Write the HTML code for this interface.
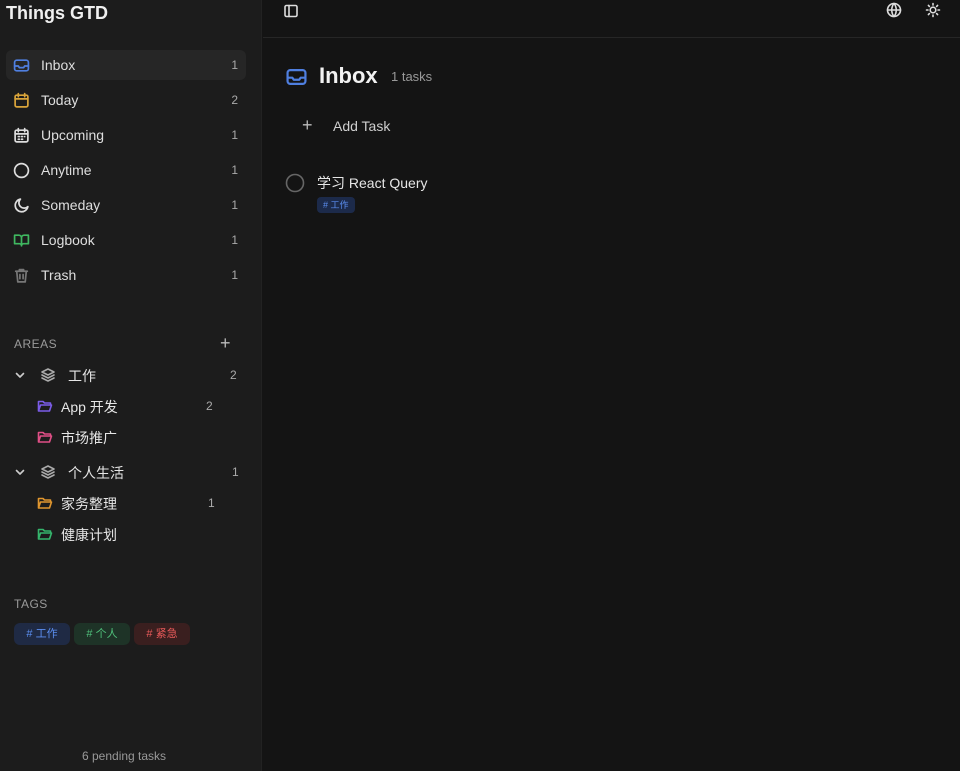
<!DOCTYPE html>
<html><head><meta charset="utf-8"><style>
*{box-sizing:border-box;margin:0;padding:0}
body{width:960px;height:771px;overflow:hidden;background:#141414;font-family:"Liberation Sans","Noto Sans CJK SC",sans-serif;color:#e6e6e6;position:relative}
.sb{position:absolute;left:0;top:0;width:262px;height:771px;background:#1c1c1c;border-right:1px solid #222}
.abs{position:absolute}
.title{left:6px;top:3px;font-size:18px;font-weight:bold;color:#f0f0f0}
.nav{position:absolute;left:6px;width:240px;height:30px;border-radius:6px;display:flex;align-items:center;font-size:14px;color:#dedede}
.nav svg{position:absolute;left:7px;top:7px}
.nav .l{position:absolute;left:35px}
.nav .c{position:absolute;right:8px;font-size:12px;color:#aaa}
.sec{font-size:12px;color:#9a9a9a;letter-spacing:.5px}
.tag{position:absolute;top:623px;height:22px;border-radius:6px;font-size:11px;line-height:22px;width:56px;text-align:center}
svg{fill:none;stroke-width:1.6;stroke-linecap:round;stroke-linejoin:round}
</style></head><body>
<div class="sb">
<div class="abs title">Things GTD</div>

<div class="nav" style="top:50px;background:#262626"><svg width="17" height="17" viewBox="0 0 16 16" stroke="#4f7fe0"><rect x="1.5" y="3" width="13" height="10" rx="2"/><path d="M1.5 8.5h3.5l1 1.5h4l1-1.5h3.5"/></svg><span class="l">Inbox</span><span class="c">1</span></div>
<div class="nav" style="top:85px"><svg width="17" height="17" viewBox="0 0 16 16" stroke="#d9a43a"><rect x="2" y="3" width="12" height="11" rx="1.5"/><path d="M2 6.5h12M5 1.5v3M11 1.5v3"/></svg><span class="l">Today</span><span class="c">2</span></div>
<div class="nav" style="top:120px"><svg width="17" height="17" viewBox="0 0 16 16" stroke="#ddd"><rect x="2" y="3" width="12" height="11" rx="1.5"/><path d="M2 6.5h12M5 1.5v3M11 1.5v3M5 9h1M8 9h1M11 9h0M5 11.5h1M8 11.5h1"/></svg><span class="l">Upcoming</span><span class="c">1</span></div>
<div class="nav" style="top:155px"><svg width="17" height="17" viewBox="0 0 16 16" stroke="#ddd"><circle cx="8" cy="8" r="6.5"/></svg><span class="l">Anytime</span><span class="c">1</span></div>
<div class="nav" style="top:190px"><svg width="17" height="17" viewBox="0 0 16 16" stroke="#ddd"><path d="M7 2a6 6 0 1 0 7 7A4.5 4.5 0 0 1 7 2z"/></svg><span class="l">Someday</span><span class="c">1</span></div>
<div class="nav" style="top:225px"><svg width="17" height="17" viewBox="0 0 16 16" stroke="#3fb860"><path d="M1.5 3h4a2.5 2.5 0 0 1 2.5 2.5V13a2 2 0 0 0-2-2H1.5zM14.5 3h-4A2.5 2.5 0 0 0 8 5.5V13a2 2 0 0 1 2-2h4.5z"/></svg><span class="l">Logbook</span><span class="c">1</span></div>
<div class="nav" style="top:260px"><svg width="17" height="17" viewBox="0 0 16 16" stroke="#777"><path d="M2.5 4h11M6 4V2.5h4V4M3.5 4l1 10h7l1-10M6.5 7v4M9.5 7v4"/></svg><span class="l">Trash</span><span class="c">1</span></div>

<div class="abs sec" style="left:14px;top:337px">AREAS</div>
<div class="abs" style="left:220px;top:333px;font-size:18px;color:#bbb">+</div>

<svg class="abs" style="left:14px;top:369px" width="12" height="12" viewBox="0 0 12 12" stroke="#ccc"><path d="M2.5 4.5L6 8l3.5-3.5"/></svg>
<svg class="abs" style="left:40px;top:367px" width="16" height="16" viewBox="0 0 16 16" stroke="#aaa"><path d="M8 2l6 3-6 3-6-3zM2 8l6 3 6-3M2 11l6 3 6-3"/></svg>
<div class="abs" style="left:68px;top:366px;font-size:14px">工作</div>
<div class="abs" style="left:230px;top:368px;font-size:12px;color:#aaa">2</div>

<svg class="abs" style="left:37px;top:398px" width="16" height="16" viewBox="0 0 16 16" stroke="#7b5ce8"><path d="M1.5 13V3.5h4.5l1.5 1.5h6v2M1.5 13l2-6h11l-2 6z"/></svg>
<div class="abs" style="left:61px;top:397px;font-size:14px">App 开发</div>
<div class="abs" style="left:206px;top:399px;font-size:12px;color:#aaa">2</div>
<svg class="abs" style="left:37px;top:429px" width="16" height="16" viewBox="0 0 16 16" stroke="#e04f86"><path d="M1.5 13V3.5h4.5l1.5 1.5h6v2M1.5 13l2-6h11l-2 6z"/></svg>
<div class="abs" style="left:61px;top:428px;font-size:14px">市场推广</div>

<svg class="abs" style="left:14px;top:466px" width="12" height="12" viewBox="0 0 12 12" stroke="#ccc"><path d="M2.5 4.5L6 8l3.5-3.5"/></svg>
<svg class="abs" style="left:40px;top:464px" width="16" height="16" viewBox="0 0 16 16" stroke="#aaa"><path d="M8 2l6 3-6 3-6-3zM2 8l6 3 6-3M2 11l6 3 6-3"/></svg>
<div class="abs" style="left:68px;top:463px;font-size:14px">个人生活</div>
<div class="abs" style="left:232px;top:465px;font-size:12px;color:#aaa">1</div>

<svg class="abs" style="left:37px;top:495px" width="16" height="16" viewBox="0 0 16 16" stroke="#e0962e"><path d="M1.5 13V3.5h4.5l1.5 1.5h6v2M1.5 13l2-6h11l-2 6z"/></svg>
<div class="abs" style="left:61px;top:494px;font-size:14px">家务整理</div>
<div class="abs" style="left:208px;top:496px;font-size:12px;color:#aaa">1</div>
<svg class="abs" style="left:37px;top:526px" width="16" height="16" viewBox="0 0 16 16" stroke="#35b56c"><path d="M1.5 13V3.5h4.5l1.5 1.5h6v2M1.5 13l2-6h11l-2 6z"/></svg>
<div class="abs" style="left:61px;top:525px;font-size:14px">健康计划</div>

<div class="abs sec" style="left:14px;top:597px">TAGS</div>
<div class="tag" style="left:14px;background:#1f2a44;color:#5b8ef0"># 工作</div>
<div class="tag" style="left:74px;background:#1e3327;color:#4fbf7a"># 个人</div>
<div class="tag" style="left:134px;background:#3a1f1f;color:#e95a5a"># 紧急</div>

<div class="abs" style="left:82px;top:749px;font-size:12px;color:#999">6 pending tasks</div>
</div>

<div class="abs" style="left:263px;top:37px;width:697px;height:1px;background:#262626"></div>
<svg class="abs" style="left:283px;top:3px" width="16" height="16" viewBox="0 0 16 16" stroke="#ddd"><rect x="2" y="2.5" width="12" height="11" rx="1.5"/><path d="M6 2.5v11"/></svg>
<svg class="abs" style="left:886px;top:2px" width="16" height="16" viewBox="0 0 16 16" stroke="#ddd"><circle cx="8" cy="8" r="6.5"/><path d="M1.5 8h13M8 1.5c-3 3.5-3 9.5 0 13M8 1.5c3 3.5 3 9.5 0 13"/></svg>
<svg class="abs" style="left:925px;top:2px" width="16" height="16" viewBox="0 0 16 16" stroke="#ddd"><circle cx="8" cy="8" r="2.8"/><path d="M8 1.5v1.5M8 13v1.5M1.5 8H3M13 8h1.5M3.4 3.4l1 1M11.6 11.6l1 1M3.4 12.6l1-1M11.6 4.4l1-1"/></svg>

<svg class="abs" style="left:285px;top:66px" width="23" height="22" viewBox="0 0 16 16" stroke="#4f7fe0"><rect x="1.5" y="3" width="13" height="10" rx="2"/><path d="M1.5 8.5h3.5l1 1.5h4l1-1.5h3.5"/></svg>
<div class="abs" style="left:319px;top:63px;font-size:22px;font-weight:bold;color:#f2f2f2">Inbox</div>
<div class="abs" style="left:391px;top:69px;font-size:13px;color:#999">1 tasks</div>

<div class="abs" style="left:302px;top:115px;font-size:18px;color:#bbb">+</div>
<div class="abs" style="left:333px;top:118px;font-size:14px;color:#cfcfcf">Add Task</div>

<svg class="abs" style="left:285px;top:173px" width="20" height="20" viewBox="0 0 20 20" stroke="#666"><circle cx="10" cy="10" r="8.5"/></svg>
<div class="abs" style="left:317px;top:173px;font-size:14px;color:#e6e6e6">学习 React Query</div>
<div class="abs" style="left:317px;top:197px;height:16px;padding:0 6px;border-radius:4px;background:#1c2a4a;color:#5b8ef0;font-size:9px;line-height:16px"># 工作</div>
</body></html>
